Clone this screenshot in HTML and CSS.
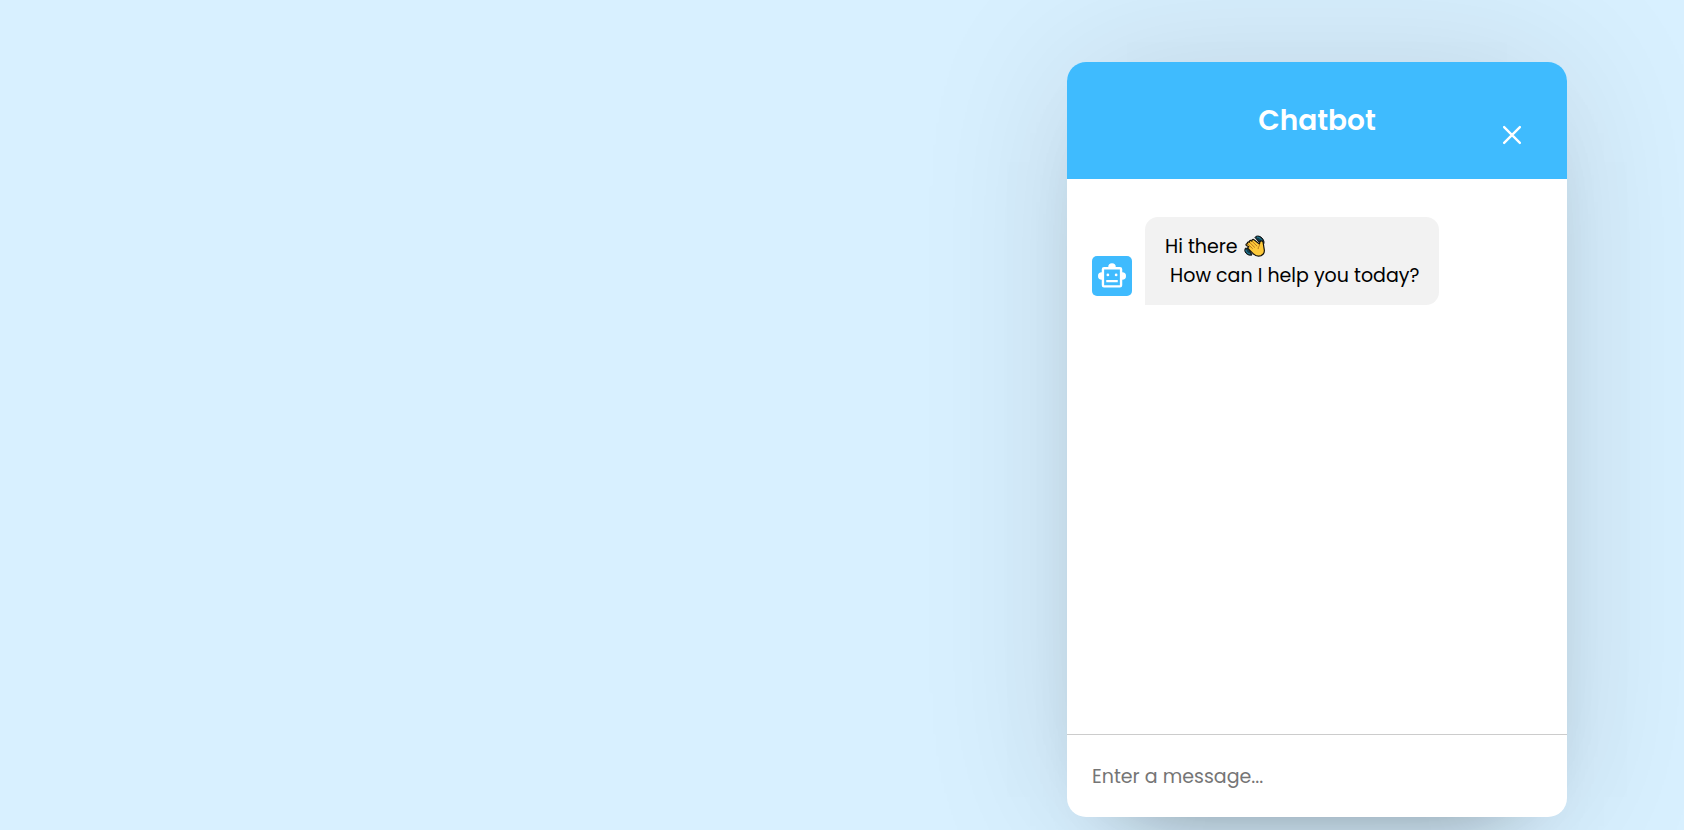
FILE: index.html
```html
<!DOCTYPE html>
<html lang="en">
<head>
<meta charset="utf-8">
<meta name="viewport" content="width=device-width, initial-scale=1">
<title>Chatbot</title>
<link rel="stylesheet" href="styles.css">
</head>
<body class="page">
<main class="chatbot">
  <header class="chatbot-header">
    <h1 class="chatbot-title">Chatbot</h1>
    <button class="close-button" type="button" aria-label="Close">
      <svg class="icon" viewBox="0 0 24 24" aria-hidden="true"><path d="M5.700 5.700 18.300 18.300M18.300 5.700 5.700 18.300" fill="none" stroke="currentColor" stroke-width="1.900" stroke-linecap="round"/></svg>
    </button>
  </header>
  <ul class="chatbox">
    <li class="chat">
      <span class="avatar">
        <svg class="icon" viewBox="0 0 24 24" aria-hidden="true"><path fill="currentColor" fill-rule="evenodd" d="M3.800 15a3 3 0 0 1 0-6V6.600A1.800 1.800 0 0 1 5.600 4.800H9a3 3 0 0 1 6 0h3.400A1.800 1.800 0 0 1 20.200 6.600v2.400a3 3 0 0 1 0 6v4.400a1.800 1.800 0 0 1-1.800 1.800H5.600A1.800 1.800 0 0 1 3.800 19.400ZM5.700 6.700v12.600h12.600V6.700ZM8.700 10a1.100 1.100 0 1 1 0 2.200 1.100 1.100 0 0 1 0-2.200ZM15.300 10a1.100 1.100 0 1 1 0 2.200 1.100 1.100 0 0 1 0-2.200ZM7.400 15.200h9.200v1.700H7.400Z"/></svg>
      </span>
      <p class="bubble">Hi there <svg class="wave" viewBox="0 0 22 22" role="img" aria-label="Waving hand">
        <path d="M11 2.500C12 .5 15.500 .5 18 3c2 2 2.500 4.500 1.500 6.500L15 7ZM1.500 13c-1.200 2-.8 3.700.5 5.200 1.600 1.800 4 2.400 6 1.800L5 14Z" fill="#123d4d" stroke="#111" stroke-width="1"/>
        <path d="M13 2c2.500.2 4.500 2 5 4.500M1.900 15c.3 2 1.700 3.500 4 3.900" fill="none" stroke="#288ba5" stroke-width="1"/>
        <path d="M2.300 10.500c-.8-1 .2-2.200 1.300-1.700-.7-1.300.7-2.500 1.900-1.500-.5-1.500 1.200-2.500 2.300-1.300-.2-1.500 1.500-2 2.500-1l5.200 4 .4-2c.4-1.500 2.900-1.400 3.200.3l1.200 7.500c.5 3.500-2 6.300-5.700 6.300-2.300 0-4-1-5.500-2.500L4.200 13.700c-.8-.8-.4-1.900.6-1.900Z" fill="#fdc93a" stroke="#15120a" stroke-width="1.200" stroke-linejoin="round"/>
        <path d="m3.800 9 4.600 4.500M5.700 7.500l4.900 4.800M8 6.200l4.900 4.800M15.600 9.500c.3 1.500-1.500 2.200-1.500 4.200" fill="none" stroke="#a45f12" stroke-width=".8" stroke-linecap="round"/>
      </svg><br>&nbsp;How can I help you today?</p>
    </li>
  </ul>
  <form class="chat-input">
    <textarea class="message-field" rows="1" placeholder="Enter a message..." aria-label="Enter a message"></textarea>
  </form>
</main>
</body>
</html>
```
FILE: styles.css
```css
* {
  box-sizing: border-box;
  margin: 0;
  padding: 0;
}

.page {
  display: flex;
  justify-content: flex-end;
  min-height: 100vh;
  padding: 62px 117px 13px 16px;
  background: #d8f0ff;
  font-family: Poppins, Inter, "Open Sans", sans-serif;
  overflow: hidden;
}

.chatbot {
  display: flex;
  flex-direction: column;
  width: 100%;
  max-width: 500px;
  overflow: hidden;
  background: #fff;
  border-radius: 19px;
  box-shadow: 0 0 160px 0 rgba(0, 0, 0, 0.11), 0 40px 80px -60px rgba(0, 0, 0, 0.5);
}

.chatbot-header {
  position: relative;
  padding: 39px 20px 38px;
  color: #fff;
  text-align: center;
  background: #3fbbfe;
}

.chatbot-title {
  font-size: 28px;
  font-weight: 600;
  line-height: 40px;
}

.close-button {
  position: absolute;
  top: 58px;
  right: 40px;
  display: flex;
  color: inherit;
  background: none;
  border: 0;
  cursor: pointer;
}

.icon {
  display: block;
  width: 30px;
  height: 30px;
}

.chatbox {
  flex: 1;
  padding: 38px 25px;
  list-style: none;
}

.chat {
  display: flex;
  align-items: flex-end;
  gap: 13px;
}

.avatar {
  display: grid;
  flex: none;
  place-items: center;
  width: 40px;
  height: 40px;
  margin-bottom: 9px;
  color: #fff;
  background: #3fbbfe;
  border-radius: 5px;
}

.bubble {
  padding: 15px 20px;
  color: #000;
  font-size: 19px;
  line-height: 29px;
  background: #f2f2f2;
  border-radius: 13px 13px 13px 0;
}

.wave {
  width: 22px;
  height: 22px;
  margin-left: 1px;
  vertical-align: -4px;
}

.chat-input {
  display: flex;
  padding: 27px 25px 25px;
  border-top: 1px solid #ccc;
}

.message-field {
  flex: 1;
  height: 30px;
  color: #000;
  font-family: inherit;
  font-size: 19px;
  line-height: 30px;
  background: none;
  border: 0;
  outline: 0;
  resize: none;
}

.message-field::placeholder {
  color: #757575;
}
```
